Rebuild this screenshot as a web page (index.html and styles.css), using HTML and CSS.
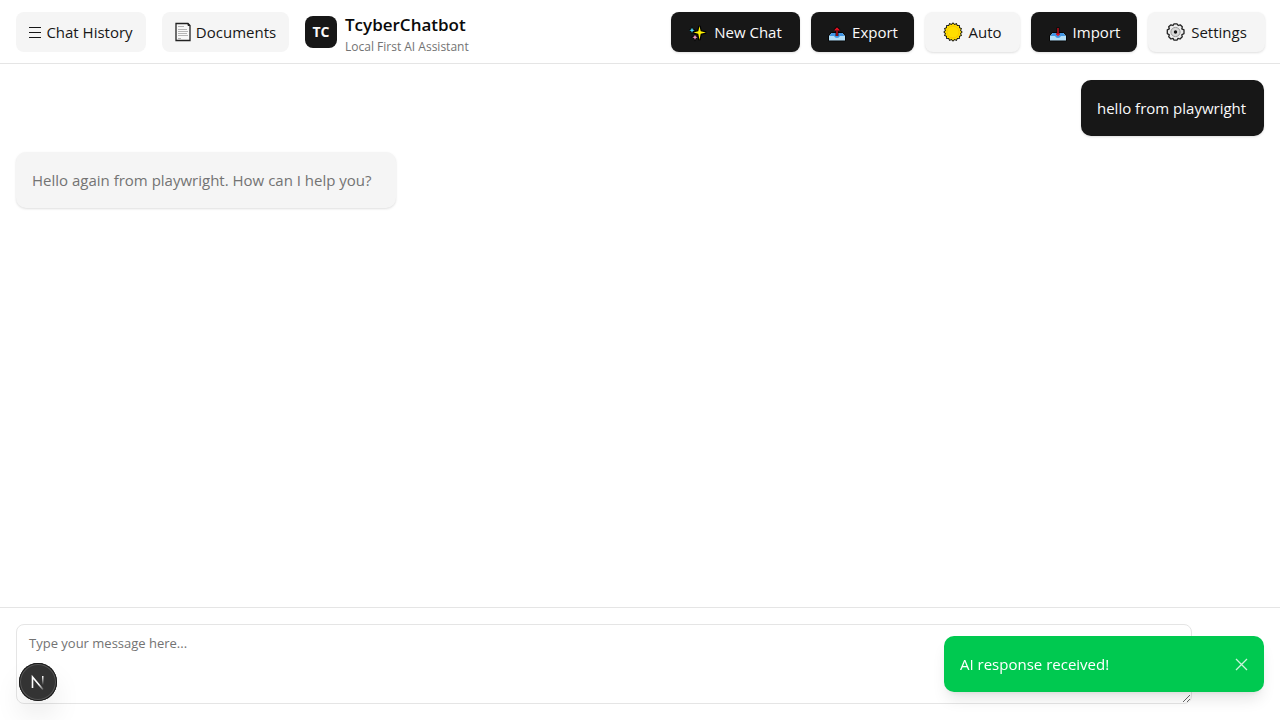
FILE: index.html
```html
<!DOCTYPE html>
<html lang="en">
<head>
<meta charset="utf-8">
<meta name="viewport" content="width=device-width, initial-scale=1">
<title>TcyberChatbot</title>
<link rel="stylesheet" href="styles.css">
</head>
<body>
<div class="app">
  <header class="topbar">
    <div class="group group-left">
      <button class="btn light flat history" type="button">
        <svg class="icon-menu" viewBox="0 0 12 14" aria-hidden="true"><path d="M0 2.500h12M0 7.500h12M0 12.500h12" stroke="#171717"/></svg>
        <span>Chat History</span>
      </button>
      <button class="btn light flat documents" type="button">
        <svg class="icon-doc" viewBox="0 0 16 20" aria-hidden="true"><path d="M1 1.500h12l2 2v15H1z" fill="#f8f8f8" stroke="#222" stroke-width="1.300"/><path d="M13 1.500v2h2" fill="#222" stroke="#222"/><path d="M3 4.500h6M3 7.500h9M3 9.500h10M3 11.500h9M3 13.500h10M3 16.500h3" stroke="#b5b5b5"/></svg>
        <span>Documents</span>
      </button>
      <div class="brand">
        <div class="logo">TC</div>
        <div class="brand-text">
          <h1 class="brand-name">TcyberChatbot</h1>
          <p class="tagline">Local First AI Assistant</p>
        </div>
      </div>
    </div>
    <div class="group group-right">
      <button class="btn dark new-chat" type="button">
        <svg class="icon" viewBox="0 0 20 20" aria-hidden="true"><path d="M10.500 4l1.200 5.300L17 10.500l-5.300 1.200L10.500 18l-1.200-6.300L4.500 10.500l4.800-1.200z" fill="#fff100" stroke="#000" stroke-width="2.400" paint-order="stroke"/><path d="M3 5.500l.8 1.900 1.900.8-1.900.8L3 11l-.8-2-1.900-.8 1.900-.8z" fill="#50d8f5" stroke="#000" stroke-width="1.200" paint-order="stroke"/><path d="M6 12.500l.8 1.900 1.900.8-1.900.8L6 18l-.8-2-1.900-.8 1.900-.8z" fill="#f49ac1" stroke="#000" stroke-width="1.200" paint-order="stroke"/></svg>
        <span>New Chat</span>
      </button>
      <button class="btn dark export" type="button">
        <svg class="icon" viewBox="0 0 20 20" aria-hidden="true"><path d="M4.500 11h11l2.500 3v4.500H2V14z" fill="#b3def7" stroke="#000" stroke-width="1.400" paint-order="stroke" stroke-linejoin="round"/><path d="M4.700 11h10.600l2.200 3h-4.600q-.6 2-2.900 2t-2.900-2H2.500z" fill="#4096e5"/><path d="M10 6v8M7.700 8.500L10 6.200l2.300 2.300" fill="none" stroke="#000" stroke-width="2.800"/><path d="M10 6v8M7.700 8.500L10 6.200l2.300 2.300" fill="none" stroke="#e81224" stroke-width="1.200"/></svg>
        <span>Export</span>
      </button>
      <button class="btn light auto" type="button">
        <svg class="icon" viewBox="0 0 20 20" aria-hidden="true">
          <defs><rect id="ray" x="4" y="4" width="12" height="12"/></defs>
          <g fill="#151515" stroke="#151515" stroke-width="1.800"><use href="#ray"/><use href="#ray" transform="rotate(22.500 10 10)"/><use href="#ray" transform="rotate(45 10 10)"/><use href="#ray" transform="rotate(67.500 10 10)"/></g>
          <g fill="#ffde00"><use href="#ray"/><use href="#ray" transform="rotate(22.500 10 10)"/><use href="#ray" transform="rotate(45 10 10)"/><use href="#ray" transform="rotate(67.500 10 10)"/></g>
          <circle cx="10" cy="10" r="6" fill="none" stroke="#f4b800" stroke-width=".6"/>
        </svg>
        <span>Auto</span>
      </button>
      <button class="btn dark import" type="button">
        <svg class="icon" viewBox="0 0 20 20" aria-hidden="true"><path d="M4.500 11h11l2.500 3v4.500H2V14z" fill="#b3def7" stroke="#000" stroke-width="1.400" paint-order="stroke" stroke-linejoin="round"/><path d="M4.700 11h10.600l2.200 3h-4.600q-.6 2-2.900 2t-2.900-2H2.500z" fill="#4096e5"/><path d="M10 5.500V13" stroke="#000" stroke-width="2.800"/><path d="M10 6v7M8.300 11.600l1.700 1.700 1.700-1.700" fill="none" stroke="#e81224" stroke-width="1.200"/></svg>
        <span>Import</span>
      </button>
      <button class="btn light settings" type="button">
        <svg class="icon" viewBox="0 0 20 20" aria-hidden="true"><path d="M8 1.800h3l1.200 1.700 2-.7 2.100 2-.5 2 2.200 1v3.800l-2.200 1.200.5 2-2.300 2.200-2-.6L11 18.200H8l-1-1.800-2 .6-2.300-2.200.6-2-2-1.200V7.800l2-1-.6-2 2.300-2 2 .7z" fill="#ececec" stroke="#222" stroke-width="1.300" stroke-linejoin="round"/><circle cx="9.500" cy="10" r="4.600" fill="#d8d8d8" stroke="#999"/><circle cx="9.500" cy="10" r="1.700" fill="#111"/></svg>
        <span>Settings</span>
      </button>
    </div>
  </header>

  <main class="messages">
    <p class="message user">hello from playwright</p>
    <p class="message reply">Hello again from playwright. How can I help you?</p>
  </main>

  <form class="composer">
    <textarea class="input" aria-label="Message" placeholder="Type your message here..."></textarea>
  </form>
</div>

<button class="dev-badge" type="button" aria-label="Open developer tools">
  <svg viewBox="0 0 38 38" aria-hidden="true">
    <defs>
      <linearGradient id="stem" x1="0" y1="0" x2="0" y2="1"><stop offset="0" stop-color="#fff"/><stop offset="1" stop-color="#fff" stop-opacity="0"/></linearGradient>
      <linearGradient id="diagonal" x1="0" y1="0" x2="1" y2="1"><stop offset=".6" stop-color="#fff"/><stop offset="1" stop-color="#fff" stop-opacity=".2"/></linearGradient>
    </defs>
    <path d="M13.500 25V14l10.500 12.500" fill="none" stroke="url(#diagonal)" stroke-width="1.600"/>
    <rect x="23" y="13" width="1.500" height="9" fill="url(#stem)"/>
  </svg>
</button>

<div class="toast" role="status">
  <span>AI response received!</span>
  <button class="toast-close" type="button" aria-label="Dismiss">
    <svg viewBox="0 0 13 13" aria-hidden="true"><path d="M1 1l11 11M12 1L1 12" stroke="currentColor" stroke-width="1.300"/></svg>
  </button>
</div>
</body>
</html>
```
FILE: styles.css
```css
* {
  box-sizing: border-box;
}

body {
  margin: 0;
  background: #fff;
  color: #171717;
  font: 15px/24px "Segoe UI", "Open Sans", "Noto Sans", sans-serif;
}

button,
textarea {
  font: inherit;
}

h1,
p {
  margin: 0;
}

.app {
  display: flex;
  flex-direction: column;
  min-height: 100vh;
}

.topbar {
  display: flex;
  align-items: center;
  justify-content: space-between;
  min-height: 64px;
  padding: 0 15px 0 16px;
  border-bottom: 1px solid #e5e5e5;
}

.group,
.brand {
  display: flex;
  align-items: center;
}

.group-left {
  gap: 16px;
}

.group-right {
  gap: 11px;
}

.btn {
  display: flex;
  align-items: center;
  justify-content: center;
  gap: 5px;
  height: 40px;
  padding: 0 12px;
  border: 0;
  border-radius: 8px;
  white-space: nowrap;
  box-shadow: 0 1px 3px rgb(0 0 0 / 8%), 0 1px 2px rgb(0 0 0 / 6%);
}

.light {
  background: #f5f5f5;
  color: #171717;
}

.dark {
  background: #171717;
  color: #fafafa;
}

.flat {
  box-shadow: none;
}

.icon {
  width: 20px;
  height: 20px;
}

.icon-menu {
  width: 12px;
  height: 14px;
}

.icon-doc {
  width: 16px;
  height: 20px;
}

.history { min-width: 130px; }
.documents { min-width: 127px; }
.new-chat { min-width: 129px; }
.export { min-width: 103px; }
.auto { min-width: 95px; }
.import { min-width: 106px; }
.settings { min-width: 117px; }

.brand {
  gap: 8px;
}

.brand-text {
  padding-top: 2px;
}

.logo {
  display: flex;
  align-items: center;
  justify-content: center;
  width: 32px;
  height: 32px;
  border-radius: 8px;
  background: #171717;
  color: #fafafa;
  font-size: 14px;
  font-weight: 700;
}

.brand-name {
  color: #0a0a0a;
  font-size: 17px;
  font-weight: 600;
  line-height: 28px;
}

.tagline {
  color: #737373;
  font-size: 12px;
  line-height: 16px;
}

.messages {
  display: flex;
  flex: 1;
  flex-direction: column;
  gap: 16px;
  padding: 16px;
}

.message {
  max-width: 80%;
  padding: 16px;
  border-radius: 10px;
  box-shadow: 0 1px 3px rgb(0 0 0 / 8%), 0 1px 2px rgb(0 0 0 / 6%);
}

.user {
  align-self: flex-end;
  min-width: 183px;
  background: #171717;
  color: #fafafa;
}

.reply {
  align-self: flex-start;
  min-width: 380px;
  background: #f5f5f5;
  color: #737373;
}

.composer {
  display: flex;
  padding: 16px 88px 16px 16px;
  border-top: 1px solid #e5e5e5;
}

.input {
  flex: 1;
  height: 80px;
  padding: 8px 12px;
  border: 1px solid #e5e5e5;
  border-radius: 8px;
  background: #fff;
  color: #171717;
  font-size: 13px;
  line-height: 20px;
  resize: vertical;
}

.input::placeholder {
  color: #737373;
}

.dev-badge {
  position: fixed;
  bottom: 19px;
  left: 19px;
  width: 38px;
  height: 38px;
  padding: 0;
  border: 0;
  border-radius: 50%;
  background: #333;
  box-shadow: inset 0 0 0 1px #171717, inset 0 0 0 2px #555, 0 16px 32px -8px rgb(0 0 0 / 24%);
}

.dev-badge svg {
  display: block;
}

.toast {
  position: fixed;
  right: 16px;
  bottom: 28px;
  display: flex;
  align-items: center;
  justify-content: space-between;
  width: 320px;
  padding: 16px;
  border-radius: 10px;
  background: #00c950;
  color: #fff;
  font-weight: 500;
  box-shadow: 0 10px 15px -3px rgb(0 0 0 / 10%), 0 4px 6px -4px rgb(0 0 0 / 10%);
}

.toast-close {
  padding: 0;
  border: 0;
  background: none;
  color: rgb(255 255 255 / 80%);
}

.toast-close svg {
  display: block;
  width: 13px;
  height: 13px;
}
```
